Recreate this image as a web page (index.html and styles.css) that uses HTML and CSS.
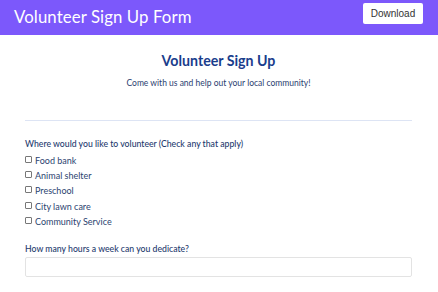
FILE: index.html
```html
<!DOCTYPE html>
<html>
<head>
<meta charset="utf-8">
<link rel="stylesheet" href="styles.css">
</head>
<body>
<header class="topbar">
  <h1 class="app-title">Volunteer Sign Up Form</h1>
  <button class="download-btn">Download</button>
</header>
<main class="form-wrap">
  <h2 class="form-title">Volunteer Sign Up</h2>
  <p class="form-sub">Come with us and help out your local community!</p>
  <hr class="divider">
  <div class="field">
    <div class="field-label">Where would you like to volunteer (Check any that apply)</div>
    <label class="check"><input type="checkbox"><span>Food bank</span></label>
    <label class="check"><input type="checkbox"><span>Animal shelter</span></label>
    <label class="check"><input type="checkbox"><span>Preschool</span></label>
    <label class="check"><input type="checkbox"><span>City lawn care</span></label>
    <label class="check"><input type="checkbox"><span>Community Service</span></label>
  </div>
  <div class="field field-hours">
    <div class="field-label">How many hours a week can you dedicate?</div>
    <input class="text-input" type="text">
  </div>
</main>
</body>
</html>
```
FILE: styles.css
```css
html, body {
  margin: 0;
  padding: 0;
  background: #ffffff;
  font-family: "Lato", "Noto Sans", sans-serif;
  overflow: hidden;
}
.topbar {
  height: 35px;
  background: #7c58fb;
  display: flex;
  align-items: center;
  justify-content: space-between;
  padding: 0 15px 0 14px;
  box-sizing: border-box;
}
.app-title {
  margin: 0;
  color: #ffffff;
  font-weight: 400;
  font-size: 16.8px;
  letter-spacing: 0.1px;
  position: relative;
  top: -1px;
}
.download-btn {
  align-self: flex-start;
  margin-top: 3px;
  width: 60px;
  height: 21px;
  background: #ffffff;
  border: none;
  border-radius: 2px;
  font-family: "Liberation Sans", Arial, sans-serif;
  font-size: 10px;
  color: #333333;
  padding: 0;
}
.form-wrap {
  padding: 0 26px 0 25px;
}
.form-title {
  margin: 16px 0 0;
  text-align: center;
  font-size: 14.2px;
  font-weight: 700;
  color: #1a3d8c;
  line-height: 20px;
}
.form-sub {
  margin: 6px 0 0;
  text-align: center;
  font-size: 8.5px;
  color: #2b4170;
  line-height: 12px;
}
.divider {
  margin: 31px 0 0;
  border: none;
  border-top: 1px solid #dde4f4;
  height: 0;
}
.field {
  margin-top: 17px;
}
.field-label {
  font-size: 8.7px;
  color: #1e3a6e;
  font-weight: 500;
  line-height: 12px;
  margin-bottom: 3px;
}
.check {
  display: flex;
  align-items: center;
  height: 15.2px;
  font-size: 9px;
  color: #2c4470;
}
.check input {
  -webkit-appearance: none;
  appearance: none;
  margin: 0 3px 0 0;
  width: 7px;
  height: 7px;
  border: 1px solid #777777;
  border-radius: 1px;
  background: #ffffff;
  box-sizing: border-box;
  position: relative;
  top: -1px;
}
.field-hours {
  margin-top: 14px;
}
.field-hours .field-label {
  margin-bottom: 2px;
}
.text-input {
  display: block;
  width: 100%;
  box-sizing: border-box;
  height: 20px;
  border: 1px solid #e3e3e3;
  border-radius: 2px;
}
```
